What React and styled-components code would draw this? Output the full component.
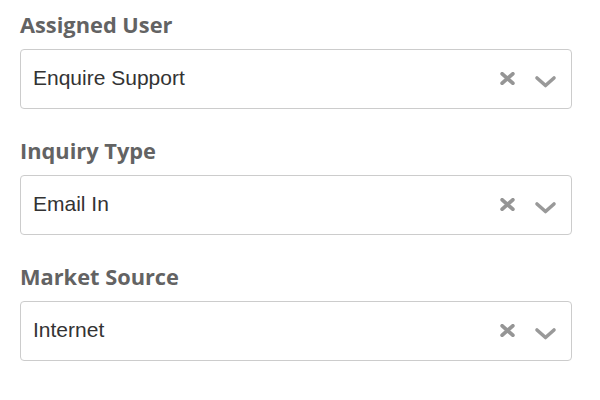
import React from "react";
import styled, { createGlobalStyle } from "styled-components";

const Global = createGlobalStyle`
  html, body { margin: 0; padding: 0; background: #fff; }
  body { width: 600px; height: 400px; overflow: hidden; }
`;

const Form = styled.div`
  display: flex;
  flex-direction: column;
  gap: 28px;
  padding: 11px 28px 0 20px;
`;

const Field = styled.div`
  display: flex;
  flex-direction: column;
  gap: 10px;
`;

const Label = styled.label`
  font-family: "Open Sans", sans-serif;
  font-weight: 700;
  font-size: 21.8px;
  line-height: 28px;
  color: #636363;
`;

const Select = styled.div`
  box-sizing: border-box;
  height: 60px;
  border: 1px solid #ccc;
  border-radius: 4px;
  display: flex;
  align-items: center;
  padding: 0 14px 2px 12px;
  background: #fff;
`;

const Value = styled.span`
  flex: 1;
  font-family: "Liberation Sans", Arial, sans-serif;
  font-size: 21px;
  color: #333;
`;

const Icons = styled.div`
  display: flex;
  align-items: center;
  gap: 19px;
`;

const ClearIcon = () => (
  <svg width="15" height="13" viewBox="0 0 15 13">
    <path d="M2.2 1.8 L12.8 11.2 M12.8 1.8 L2.2 11.2" stroke="#959595" strokeWidth="3.8" strokeLinecap="round" fill="none" />
  </svg>
);

const ChevronIcon = () => (
  <svg width="23" height="14" viewBox="0 0 23 14" style={{ marginTop: 7 }}>
    <path d="M3 3 L11.5 10.5 L20 3" stroke="#999" strokeWidth="3.6" strokeLinecap="round" strokeLinejoin="round" fill="none" />
  </svg>
);

const fields = [
  { label: "Assigned User", value: "Enquire Support" },
  { label: "Inquiry Type", value: "Email In" },
  { label: "Market Source", value: "Internet" },
];

export default function App() {
  return (
    <>
      <Global />
      <Form>
        {fields.map((f) => (
          <Field key={f.label}>
            <Label>{f.label}</Label>
            <Select>
              <Value>{f.value}</Value>
              <Icons>
                <ClearIcon />
                <ChevronIcon />
              </Icons>
            </Select>
          </Field>
        ))}
      </Form>
    </>
  );
}
